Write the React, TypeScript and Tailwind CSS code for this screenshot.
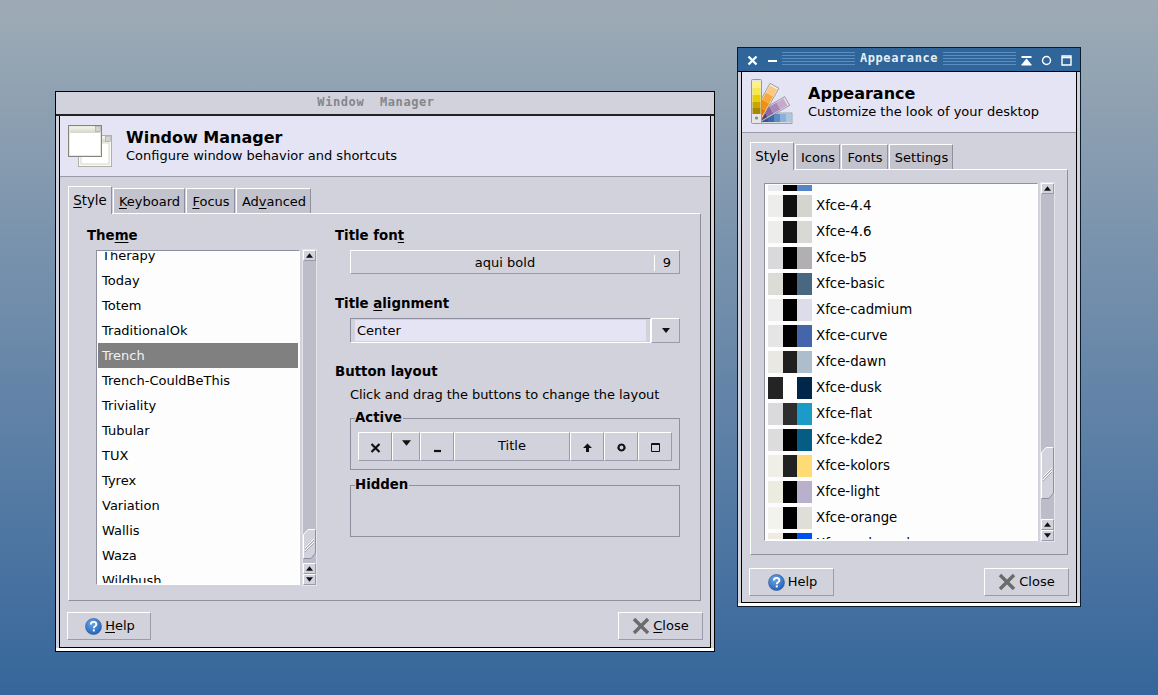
import type { ReactNode } from 'react';

const wmThemes = ['Therapy', 'Today', 'Totem', 'TraditionalOk', 'Trench', 'Trench-CouldBeThis', 'Triviality', 'Tubular', 'TUX', 'Tyrex', 'Variation', 'Wallis', 'Waza', 'Wildbush'];

const gtkThemes: [string, string, string, string][] = [
  ['', '#e9e9f0', '#000000', '#5584c8'],
  ['Xfce-4.4', '#ededeb', '#101010', '#d3d5ce'],
  ['Xfce-4.6', '#edeeec', '#111111', '#d8d8d5'],
  ['Xfce-b5', '#d9d8da', '#000000', '#b1afb2'],
  ['Xfce-basic', '#dcdcd6', '#000000', '#4a6781'],
  ['Xfce-cadmium', '#eeeeee', '#000000', '#dcdcea'],
  ['Xfce-curve', '#e5e5e5', '#000000', '#4565ab'],
  ['Xfce-dawn', '#eae8e3', '#1f1f1f', '#adbdcc'],
  ['Xfce-dusk', '#242424', '#ffffff', '#00264a'],
  ['Xfce-flat', '#dadadc', '#2e2e2e', '#1b9cc8'],
  ['Xfce-kde2', '#dcdcdc', '#000000', '#055d85'],
  ['Xfce-kolors', '#efefe7', '#222222', '#ffdb75'],
  ['Xfce-light', '#ebebdf', '#000000', '#b9b0cc'],
  ['Xfce-orange', '#f3f3ee', '#000000', '#e0ded8'],
  ['Xfce-redmondxp', '#efebe0', '#000000', '#0050ef'],
];

function Mn({ children }: { children: ReactNode }) {
  return <u className="underline decoration-1 underline-offset-2">{children}</u>;
}

function Arrow({ down, size = 7 }: { down?: boolean; size?: number }) {
  return (
    <svg width={size} height={Math.ceil(size / 2) + 1} viewBox="0 0 8 5" className="block">
      <path d={down ? 'M0 0h8L4 5z' : 'M4 0l4 5H0z'} fill="#111" />
    </svg>
  );
}

function ScrollBtn({ down }: { down?: boolean }) {
  return (
    <div className="flex h-[11px] items-center justify-center border-t border-l border-white border-r-[#9a9aaa] border-b-[#9a9aaa] border-r border-b bg-[#d2d2dc]">
      <Arrow down={down} />
    </div>
  );
}

function Thumb({ h }: { h: number }) {
  return (
    <svg width="13" height={h} viewBox={`0 0 13 ${h}`} className="block">
      <path d={`M0.5 5.5L5 .5H12.5V${h - 6}L8 ${h - .5}H.5z`} fill="#d2d2dc" />
      <path d={`M.5 ${h - .5}V5.5L5 .5H12.5`} fill="none" stroke="#fff" />
      <path d={`M12.5 .5V${h - 6}L8 ${h - .5}H.5`} fill="none" stroke="#8f8fa0" />
      <g stroke="#fff">
        <path d={`M2 ${h / 2 + 4}L11 ${h / 2 - 5}`} />
        <path d={`M2 ${h / 2 + 7}L11 ${h / 2 - 2}`} />
      </g>
      <g stroke="#a3a3b2">
        <path d={`M2 ${h / 2 + 5}L11 ${h / 2 - 4}`} />
        <path d={`M2 ${h / 2 + 8}L11 ${h / 2 - 1}`} />
      </g>
    </svg>
  );
}

function Scrollbar({ thumb, gap }: { thumb: number; gap: string }) {
  return (
    <div className="flex w-[13px] shrink-0 flex-col bg-[#bdbdc9] outline outline-1 outline-[#e4e4ea]">
      <ScrollBtn />
      <div className={`flex flex-1 flex-col justify-end ${gap}`}>
        <Thumb h={thumb} />
      </div>
      <ScrollBtn />
      <ScrollBtn down />
    </div>
  );
}

function Tabs({ items }: { items: { label: ReactNode; w: string }[] }) {
  return (
    <div className="flex h-[27px] items-end">
      {items.map((t, i) =>
        i === 0 ? (
          <div key={i} className={`${t.w} relative z-10 -mb-px flex h-[28px] items-center justify-center border-t border-l border-r border-t-white border-l-white border-r-[#8f8fa0] bg-[#d2d2dc] text-[13.33px]`}>
            {t.label}
          </div>
        ) : (
          <div key={i} className={`${t.w} ml-px flex h-[25px] items-center justify-center border-t border-l border-r border-t-white border-l-white border-r-[#8f8fa0] bg-[#c3c3ce] pt-[2px] pl-[1px]`}>
            {t.label}
          </div>
        ),
      )}
    </div>
  );
}

function HelpIcon() {
  return (
    <svg width="17" height="17" viewBox="0 0 17 17" className="ml-[2px] block shrink-0">
      <defs>
        <radialGradient id="hb" cx="0.4" cy="0.3" r="0.8">
          <stop offset="0" stopColor="#6aa5e8" />
          <stop offset="1" stopColor="#1c5cb0" />
        </radialGradient>
      </defs>
      <circle cx="8.5" cy="8.5" r="8" fill="url(#hb)" stroke="#2a5a9a" strokeWidth="0.6" />
      <path d="M5.8 6.5c0-3.4 5.6-3.4 5.6-.2 0 2-2.6 2-2.6 3.9" fill="none" stroke="#fff" strokeWidth="1.9" />
      <rect x="7.8" y="11.4" width="2" height="2" fill="#fff" />
    </svg>
  );
}

function CloseIcon() {
  return (
    <svg width="18" height="18" viewBox="0 0 18 18" className="block shrink-0">
      <path d="M2 2l14 14M16 2L2 16" stroke="#6b6b6b" strokeWidth="3.4" />
    </svg>
  );
}

function Btn({ children, w }: { children: ReactNode; w: string }) {
  return (
    <div className={`${w} flex h-[28px] items-center justify-center gap-[3px] border-t border-l border-t-white border-l-white border-r border-b border-r-[#9a9aaa] border-b-[#9a9aaa]`}>
      {children}
    </div>
  );
}

function WindowIcon() {
  return (
    <svg width="48" height="44" viewBox="0 0 48 44" className="block shrink-0">
      <defs>
        <linearGradient id="wt" x1="0" y1="0" x2="0" y2="1">
          <stop offset="0" stopColor="#f2f2ea" />
          <stop offset="1" stopColor="#d4d6c8" />
        </linearGradient>
      </defs>
      <rect x="10.5" y="11.5" width="33" height="31" fill="#f8f8f4" stroke="#b0b0a8" />
      <rect x="12" y="13" width="30" height="5" fill="url(#wt)" />
      <rect x="13" y="19" width="28" height="21" fill="#ffffff" stroke="#d8d8cf" />
      <rect x="37.5" y="12.5" width="5" height="5" fill="#d4d4d4" stroke="#999" strokeWidth="0.5" />
      <rect x="0.5" y="1.5" width="33" height="31" fill="#e8e8dc" stroke="#85857f" />
      <rect x="2" y="3" width="30" height="6" fill="url(#wt)" />
      <rect x="2" y="9" width="30" height="22" fill="#ffffff" />
      <rect x="27.5" y="2.5" width="5" height="5" fill="#d4d4d4" stroke="#999" strokeWidth="0.5" />
    </svg>
  );
}

function PaletteIcon() {
  return (
    <svg width="48" height="46" viewBox="0 0 48 46" className="block shrink-0">
      <rect x="9" y="34" width="33" height="10.5" fill="#d8dce2" stroke="#777" strokeWidth="0.6" />
      <rect x="10" y="35" width="8" height="8" fill="#2e5a9c" />
      <rect x="18" y="35" width="6" height="8" fill="#3a68a8" />
      <rect x="24" y="35" width="6" height="8" fill="#5c8cc4" />
      <rect x="30" y="35" width="6" height="8" fill="#8cb0d8" />
      <rect x="36" y="35" width="5" height="8" fill="#a8c8e0" />
      <g transform="rotate(60 6 40)">
        <rect x="1" y="4" width="10" height="36" fill="#e8e0ea" stroke="#777" strokeWidth="0.6" />
        <rect x="2" y="29" width="8" height="8" fill="#5a3a74" />
        <rect x="2" y="22" width="8" height="7" fill="#8a6aa0" />
        <rect x="2" y="14" width="8" height="8" fill="#a888b8" />
        <rect x="2" y="6" width="8" height="8" fill="#c8a8cc" />
      </g>
      <g transform="rotate(29 6 40)">
        <rect x="1" y="2" width="10" height="38" fill="#f4ece0" stroke="#777" strokeWidth="0.6" />
        <rect x="2" y="28" width="8" height="9" fill="#e87400" />
        <rect x="2" y="20" width="8" height="8" fill="#f08e18" />
        <rect x="2" y="12" width="8" height="8" fill="#f8a83c" />
        <rect x="2" y="4" width="8" height="8" fill="#fcc880" />
      </g>
      <rect x="1.5" y="0.5" width="10" height="44" rx="1" fill="#e6e6e6" stroke="#999" />
      <rect x="2.5" y="2" width="8" height="7" fill="#fff280" />
      <rect x="2.5" y="9" width="8" height="7" fill="#f8e850" />
      <rect x="2.5" y="16" width="8" height="7" fill="#e8d000" />
      <rect x="2.5" y="23" width="8" height="6" fill="#c8a800" />
      <rect x="2.5" y="29" width="8" height="6" fill="#a88800" />
      <circle cx="6.5" cy="39" r="1.6" fill="#888" />
    </svg>
  );
}

function Header({ icon, title, sub }: { icon: ReactNode; title: string; sub: string }) {
  return (
    <div className="flex h-[61px] shrink-0 items-center gap-[10px] border-b border-b-[#9a9aa8] bg-[#e5e4f5] pl-[8px]">
      <div className="flex w-[48px] justify-start">{icon}</div>
      <div className="flex flex-col">
        <div className="text-[16px] leading-[19px] font-bold">{title}</div>
        <div className="leading-[17px]">{sub}</div>
      </div>
    </div>
  );
}

function Frame({ children }: { children: ReactNode }) {
  return (
    <div className="relative flex min-h-0 flex-1 flex-col border-x border-b border-black bg-[#d2d2dc]">
      {children}
    </div>
  );
}

function DeckBtn({ w, children }: { w: string; children: ReactNode }) {
  return (
    <div className={`${w} flex h-[29px] items-center justify-center border-t border-l border-t-white border-l-white border-r border-b border-r-[#9a9aaa] border-b-[#9a9aaa]`}>
      {children}
    </div>
  );
}

function Glyph({ d, fill }: { d: string; fill?: boolean }) {
  return (
    <svg width="11" height="11" viewBox="0 0 11 11" className="mt-[2px] block">
      <path d={d} fill={fill ? '#111' : 'none'} stroke={fill ? 'none' : '#111'} strokeWidth="2.2" />
    </svg>
  );
}

function GroupBox({ label, children }: { label: string; children?: ReactNode }) {
  return (
    <div className="relative ml-[15px] h-[52px] w-[330px] border border-[#8f8fa0] px-[7px] pt-[13px]">
      <span className="absolute -top-[10px] left-[4px] bg-[#d2d2dc] pr-px text-[13.33px] leading-[17px] font-bold">{label}</span>
      {children}
    </div>
  );
}

function WmWindow() {
  return (
    <div className="absolute top-[91px] left-[55px] flex h-[561px] w-[660px] flex-col border border-black bg-[#d2d2dc]">
      <div className="flex h-[24px] shrink-0 items-center justify-center border-b-2 border-b-[#222] bg-[#d2d2dc] pr-[18px] pb-[2px] font-['DejaVu_Sans_Mono',monospace] text-[12px] font-bold tracking-[0.6px] whitespace-pre text-[#85858c]">
        {'Window  Manager'}
      </div>
      <div className="flex min-h-0 flex-1 flex-col border-b-[3px] border-b-white bg-[#d2d2dc] px-[3px]">
        <Frame>
          <Header icon={<WindowIcon />} title="Window Manager" sub="Configure window behavior and shortcuts" />
          <div className="mt-[9px] ml-[8px] mr-[9px] flex flex-1 flex-col">
            <Tabs
              items={[
                { label: <span><Mn>S</Mn>tyle</span>, w: 'w-[44px]' },
                { label: <span><Mn>K</Mn>eyboard</span>, w: 'w-[72px]' },
                { label: <span><Mn>F</Mn>ocus</span>, w: 'w-[49px]' },
                { label: <span>Ad<Mn>v</Mn>anced</span>, w: 'w-[75px]' },
              ]}
            />
            <div className="flex h-[388px] gap-[19px] border border-t-white border-l-white border-r-[#8f8fa0] border-b-[#8f8fa0] pt-[14px] pl-[18px]">
              <div className="w-[229px]">
                <div className="h-[16px] text-[13.33px] leading-[16px] font-bold">The<Mn>m</Mn>e</div>
                <div className="mt-[6px] ml-[9px] flex h-[335px] gap-[3px]">
                  <div className="w-[204px] border border-t-[#8f8fa0] border-l-[#8f8fa0] border-r-white border-b-white">
                    <div className="h-full overflow-hidden border border-[#fdfdfd] bg-[#fdfdfd]">
                      <div className="-mt-[9px]">
                        {wmThemes.map((t) => (
                          <div key={t} className={`flex h-[25px] items-center pl-[4px] ${t === 'Trench' ? 'bg-[#808080] text-[#f2f2f2]' : ''}`}>{t}</div>
                        ))}
                      </div>
                    </div>
                  </div>
                  <Scrollbar thumb={30} gap="pb-[4px]" />
                </div>
              </div>
              <div className="flex-1">
                <div className="h-[16px] text-[13.33px] leading-[16px] font-bold">Title fon<Mn>t</Mn></div>
                <div className="mt-[6px] ml-[15px] flex h-[24px] w-[330px] items-center border border-t-white border-l-white border-r-[#9a9aaa] border-b-[#9a9aaa] pt-[1px]">
                  <div className="flex-1 pl-[5px] text-center">aqui bold</div>
                  <div className="w-[25px] border-l border-l-white text-center leading-[16px]">9</div>
                </div>
                <div className="mt-[22px] h-[16px] text-[13.33px] leading-[16px] font-bold">Title <Mn>a</Mn>lignment</div>
                <div className="mt-[6px] ml-[15px] flex h-[25px] w-[330px]">
                  <div className="flex-1 border border-t-[#8f8fa0] border-l-[#8f8fa0] border-r-white border-b-white py-px pr-[4px] pl-[4px]">
                    <div className="flex h-full items-center bg-[#e5e4f5] pl-[2px]">Center</div>
                  </div>
                  <div className="flex w-[29px] items-center justify-center border border-t-white border-l-white border-r-[#9a9aaa] border-b-[#9a9aaa]">
                    <Arrow down size={8} />
                  </div>
                </div>
                <div className="mt-[21px] h-[16px] text-[13.33px] leading-[16px] font-bold">Button layout</div>
                <div className="mt-[7px] ml-[15px] h-[16px] leading-[16px] tracking-[-0.06px]">Click and drag the buttons to change the layout</div>
                <div className="mt-[15px]">
                  <GroupBox label="Active">
                    <div className="flex">
                      <DeckBtn w="w-[34px]"><Glyph d="M1.5 2l8 8M9.5 2l-8 8" /></DeckBtn>
                      <DeckBtn w="w-[28px]"><div className="-mt-[8px]"><Arrow down size={9} /></div></DeckBtn>
                      <DeckBtn w="w-[34px]"><Glyph d="M2 9h7" /></DeckBtn>
                      <DeckBtn w="w-[116px]"><span className="-mt-[1px]">Title</span></DeckBtn>
                      <DeckBtn w="w-[34px]"><Glyph fill d="M5.5 1.5L10 6H7v4H4V6H1z" /></DeckBtn>
                      <DeckBtn w="w-[34px]"><Glyph d="M5.5 2.5a3 3 0 1 0 .01 0z" /></DeckBtn>
                      <DeckBtn w="w-[34px]"><svg width="9" height="9" viewBox="0 0 9 9" className="mt-[2px] block"><path d="M.5.5h8v8h-8z M.5 1.5h8" fill="none" stroke="#111" /></svg></DeckBtn>
                    </div>
                  </GroupBox>
                </div>
                <div className="mt-[15px]">
                  <GroupBox label="Hidden" />
                </div>
              </div>
            </div>
            <div className="mt-[11px] -mx-px flex justify-between">
              <Btn w="w-[84px]"><HelpIcon /><span><Mn>H</Mn>elp</span></Btn>
              <div className="-mr-[1px]"><Btn w="w-[85px]"><CloseIcon /><span><Mn>C</Mn>lose</span></Btn></div>
            </div>
          </div>
        </Frame>
      </div>
    </div>
  );
}

function Stripes() {
  return <div className="h-[15px] flex-1 bg-[repeating-linear-gradient(to_bottom,#5c8ec4_0px,#5c8ec4_1px,#2f6599_1px,#2f6599_3px)]" />;
}

function TitleBtn({ children }: { children: ReactNode }) {
  return (
    <div className="flex h-full w-[20px] shrink-0 items-center justify-center pt-[1px]">
      <svg width="11" height="11" viewBox="0 0 11 11" className="block">{children}</svg>
    </div>
  );
}

function AppearanceWindow() {
  return (
    <div className="absolute top-[47px] left-[737px] flex h-[560px] w-[344px] flex-col border border-[#0c1c2c] bg-[#d2d2dc]">
      <div className="flex h-[24px] shrink-0 items-center border-b border-b-black bg-[#2f6599] px-[4px]">
        <TitleBtn><path d="M1.5 1.5l8 8M9.5 1.5l-8 8" stroke="#fff" strokeWidth="2.4" /></TitleBtn>
        <TitleBtn><path d="M1 6h9" stroke="#fff" strokeWidth="2" /></TitleBtn>
        <Stripes />
        <div className="w-[88px] pb-[3px] text-center font-['DejaVu_Sans_Mono',monospace] text-[12px] font-bold tracking-[0.6px] text-[#e8eef5]">Appearance</div>
        <Stripes />
        <TitleBtn><path d="M0.5 2h10" stroke="#fff" strokeWidth="2" /><path d="M5.5 3.5L10 9H1zM0.5 9h10v1.5H.5z" fill="#fff" /></TitleBtn>
        <TitleBtn><circle cx="5.5" cy="5.5" r="4" fill="none" stroke="#fff" strokeWidth="1.4" /></TitleBtn>
        <TitleBtn><path d="M1 1h9v9H1z" fill="none" stroke="#fff" strokeWidth="1.4" /><path d="M1 2.5h9" stroke="#fff" strokeWidth="1.6" /></TitleBtn>
      </div>
      <div className="flex min-h-0 flex-1 flex-col border-b-[3px] border-b-white bg-[#d2d2dc] px-[3px]">
        <Frame>
          <Header icon={<PaletteIcon />} title="Appearance" sub="Customize the look of your desktop" />
          <div className="mx-[8px] mt-[9px] flex flex-1 flex-col">
            <Tabs
              items={[
                { label: 'Style', w: 'w-[44px]' },
                { label: 'Icons', w: 'w-[45px]' },
                { label: 'Fonts', w: 'w-[47px]' },
                { label: 'Settings', w: 'w-[64px]' },
              ]}
            />
            <div className="flex h-[386px] gap-[3px] border border-t-white border-l-white border-r-[#8f8fa0] border-b-[#8f8fa0] pt-[13px] pl-[13px]">
              <div className="h-[358px] w-[274px] border border-t-[#8f8fa0] border-l-[#8f8fa0] border-r-white border-b-white">
                <div className="h-full overflow-hidden border border-[#fdfdfd] bg-[#fdfdfd]">
                  <div className="-mt-[18px]">
                    {gtkThemes.map(([name, a, b, c]) => (
                      <div key={name} className="flex h-[26px] items-center pl-[2px]">
                        <div className="h-[22px] w-[15px]" style={{ background: a }} />
                        <div className="h-[22px] w-[14px]" style={{ background: b }} />
                        <div className="h-[22px] w-[15px]" style={{ background: c }} />
                        <span className="ml-[4px] text-[13.33px]">{name}</span>
                      </div>
                    ))}
                  </div>
                </div>
              </div>
              <div className="flex h-[358px]">
                <Scrollbar thumb={52} gap="pb-[20px]" />
              </div>
            </div>
            <div className="mt-[13px] -mx-px flex justify-between">
              <Btn w="w-[85px]"><HelpIcon /><span>Help</span></Btn>
              <Btn w="w-[85px]"><CloseIcon /><span>Close</span></Btn>
            </div>
          </div>
        </Frame>
      </div>
    </div>
  );
}

export default function App() {
  return (
    <div className="relative h-[695px] w-[1158px] overflow-hidden bg-gradient-to-b from-[#9eabb5] to-[#35669b] font-['DejaVu_Sans',sans-serif] text-[13px] text-black">
      <WmWindow />
      <AppearanceWindow />
    </div>
  );
}
